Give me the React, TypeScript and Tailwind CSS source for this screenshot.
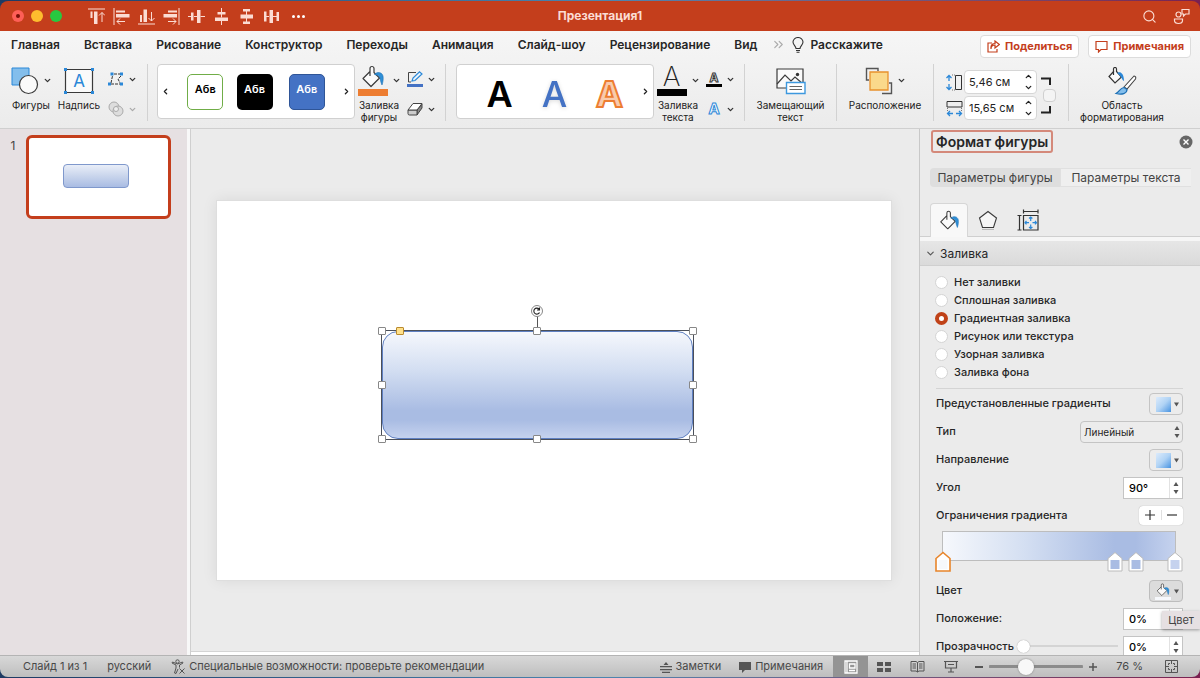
import { ReactNode, useState } from "react";
import { ChevronDown, ChevronLeft, ChevronRight, ChevronUp, ChevronsRight, Search } from "lucide-react";

const TABS = [
  "Главная", "Вставка", "Рисование", "Конструктор", "Переходы",
  "Анимация", "Слайд-шоу", "Рецензирование", "Вид",
];

const FILLS = [
  "Нет заливки", "Сплошная заливка", "Градиентная заливка",
  "Рисунок или текстура", "Узорная заливка", "Заливка фона",
];

const ALIGN_ICONS = [
  { label: "По верхнему краю", d: "M0 1H17M14 14V4.500M11 7.500L14 4.500L17 7.500", bars: "M2.500 3.500h2v6.500h-2zM6 3.500h3.500v12.500h-3.500z" },
  { label: "По левому краю", d: "M1 0V17M4 13.500H12M7 10.500L4 13.500L7 16.500", bars: "M3 2.500h9v2h-9zM3 6h13.500v3.500h-13.500z" },
  { label: "По нижнему краю", d: "M0 16H17M13.500 4V13M10.500 10L13.500 13L16.500 10", bars: "M2 7h2v7h-2zM5.500 1.500h3.500v12.500h-3.500z" },
  { label: "По правому краю", d: "M16 0V17M5 13.500H13M10 10.500L13 13.500L10 16.500", bars: "M5 2.500h9v2h-9zM.5 6h13.500v3.500h-13.500z" },
  { label: "По центру", d: "M0 8.500H3M6 8.500H9M12.500 8.500H17", bars: "M3 4.500h2.500v8h-2.500zM9 2h3.500v13h-3.500z" },
  { label: "По середине", d: "M8.500 0V4M8.500 6V9.500M8.500 13V17", bars: "M4.500 4h8v2.500h-8zM2 9.500h13v3.500h-13z" },
  { label: "Распределить по вертикали", d: "M8.500 3V7M8.500 10V14", bars: "M5 1h7v2.500h-7zM2.500 6.500h12.500v4h-12.500zM5 13.500h7v2.500h-7z" },
  { label: "Распределить по горизонтали", d: "M3 8.500H6M10 8.500H14", bars: "M1 3.500h2.500v10h-2.500zM6.500 2h3.500v13h-3.500zM13.500 4h2.500v9h-2.500z" },
];

const STOPS = [
  { pos: 0, color: "#f6f8fc" },
  { pos: 74, color: "#a9bce3" },
  { pos: 83, color: "#a9bce3" },
  { pos: 100, color: "#c5d2ee" },
];

const HANDLES = [
  "left-0 top-0", "left-1/2 top-0", "left-full top-0", "left-0 top-1/2",
  "left-full top-1/2", "left-0 top-full", "left-1/2 top-full", "left-full top-full",
];

function Bucket({ className }: { className: string }) {
  return (
    <svg viewBox="0 0 24 24" className={className} fill="none">
      <path d="M9 6.500L2 13.500L10 21.500L18.500 13L13 7.500V3.500A2 2 0 0 0 9 3.500V11" fill="#fafafa" stroke="#3a3a3a" strokeWidth="1.200" strokeLinejoin="round" />
      <path d="M13.500 9.500C16 6.500 21 7 22 11C22.500 14 22 17 21 20C19.500 17 19.500 14 18.500 12C17.500 10 15.500 10 13.500 9.500Z" fill="#2f8fd6" stroke="#1c6fb4" strokeWidth=".6" />
    </svg>
  );
}

function Caret({ faded = false }: { faded?: boolean }) {
  return <ChevronDown className={faded ? "size-[9px] shrink-0 text-[#aaa]" : "size-[9px] shrink-0 text-[#333]"} strokeWidth={3.5} />;
}

function Divider() {
  return <div className="mt-[2px] h-[57px] w-px shrink-0 bg-[#d2d2d2]" />;
}

function BigButton({ icon, label, className, caret = false }: { icon: ReactNode; label: ReactNode; className: string; caret?: boolean }) {
  return (
    <button className={`flex shrink-0 flex-col items-center text-center text-[10px] leading-[12px] ${className}`}>
      <span className="flex h-[37px] items-center gap-1">
        {icon}
        {caret && <Caret />}
      </span>
      <span className="whitespace-nowrap">{label}</span>
    </button>
  );
}

function SmallButton({ label, children, faded }: { label: string; children: ReactNode; faded?: boolean }) {
  return (
    <button aria-label={label} className="flex h-[30px] items-center gap-1">
      {children}
      <Caret faded={faded} />
    </button>
  );
}

function SizeField({ label, value, icon }: { label: string; value: string; icon: ReactNode }) {
  return (
    <div className="flex items-center gap-px">
      {icon}
      <div className="flex h-6 w-[73px] items-center rounded border border-[#d6d6d6] bg-white pr-[3px] pl-1">
        <input aria-label={label} defaultValue={value} className="w-0 flex-1 text-[11px] outline-none" />
        <span className="flex flex-col gap-0.5">
          <ChevronUp className="size-[9px]" strokeWidth={3.5} />
          <ChevronDown className="size-[9px]" strokeWidth={3.5} />
        </span>
      </div>
    </div>
  );
}

function Triangles({ className = "" }: { className?: string }) {
  return (
    <svg viewBox="0 0 6 14" className={`h-[14px] w-[6px] shrink-0 ${className}`} fill="#555">
      <path d="M.5 5L3 1L5.500 5ZM.5 9L3 13L5.500 9Z" />
    </svg>
  );
}

function Row({ label, id, children }: { label: string; id: string; children: ReactNode }) {
  return (
    <div className="flex h-7 shrink-0 items-center justify-between">
      <label htmlFor={id} className="pb-0.5">{label}</label>
      {children}
    </div>
  );
}

function SwatchButton({ id }: { id: string }) {
  return (
    <button id={id} className="flex h-[22px] w-[34px] items-center justify-between rounded-sm border border-[#c4c4c4] bg-[#ececec] pr-[3px] pl-[6px]">
      <span className="size-[15px] bg-linear-135 from-[#dcebfb] via-[#b0d3f5] to-[#4593e0]" />
      <svg viewBox="0 0 6 5" className="h-[5px] w-[5px]" fill="#555"><path d="M0 0H6L3 5Z" /></svg>
    </button>
  );
}

function Stepper({ id, label, value }: { id: string; label?: string; value: string }) {
  return (
    <div className="flex h-[22px] w-[60px] items-center border border-[#c4c4c4] bg-white">
      <input id={id} aria-label={label} defaultValue={value} className="w-0 flex-1 pl-[5px] text-[11px] text-black outline-none" />
      <span className="flex h-full w-[13px] items-center justify-center border-l border-[#e2e2e2]"><Triangles /></span>
    </div>
  );
}

function TitleBar() {
  return (
    <header className="grid h-[30px] shrink-0 grid-cols-[1fr_auto_1fr] items-center rounded-t-lg bg-[#c43e1c] text-[#fbdcd3]">
      <div className="flex items-center">
        <div className="ml-3 flex gap-[7px]">
          <button aria-label="Закрыть" className="flex size-3 items-center justify-center rounded-full bg-[#fe5f57]"><span className="size-1 rounded-full bg-[#7a0f08]" /></button>
          <button aria-label="Свернуть" className="size-3 rounded-full bg-[#febc2e]" />
          <button aria-label="Развернуть" className="size-3 rounded-full bg-[#28c840]" />
        </div>
        <div className="ml-[26px] flex items-center gap-2">
          {ALIGN_ICONS.map((icon) => (
            <button key={icon.label} aria-label={icon.label}>
              <svg viewBox="0 0 17 17" className="size-[17px]">
                <path d={icon.d} fill="none" stroke="currentColor" strokeWidth="1" />
                <path d={icon.bars} fill="currentColor" />
              </svg>
            </button>
          ))}
          <button aria-label="Ещё" className="flex gap-[2px] pl-1">
            <i className="size-[3px] rounded-full bg-white" />
            <i className="size-[3px] rounded-full bg-white" />
            <i className="size-[3px] rounded-full bg-white" />
          </button>
        </div>
      </div>
      <h1 className="text-[12px] font-bold">Презентация1</h1>
      <div className="flex items-center justify-end gap-4 pr-[10px]">
        <button aria-label="Поиск"><Search className="size-[15px]" strokeWidth={1.8} /></button>
        <button aria-label="Совместная работа">
          <svg viewBox="0 0 17 17" className="size-[17px]" fill="none" stroke="currentColor" strokeWidth="1.200">
            <circle cx="5.500" cy="6.500" r="2.500" />
            <path d="M1.500 11H9.500V12.500A4 3 0 0 1 1.500 12.500ZM9 1.500H16V6H12.500L10.500 8V6H9Z" />
          </svg>
        </button>
      </div>
    </header>
  );
}

function Tabs() {
  return (
    <nav className="flex h-[31px] shrink-0 items-center justify-between pr-[9px] pl-[11px] text-[12px] font-semibold">
      <div className="flex items-center gap-6 pb-1">
        {TABS.map((tab) => <button key={tab}>{tab}</button>)}
        <button className="-ml-2.5 flex items-center gap-1.5">
          <ChevronsRight className="size-[15px] text-[#aaa]" strokeWidth={1.8} />
          <svg viewBox="0 0 12 16" className="h-4 w-3" fill="none" stroke="#333" strokeWidth="1.100">
            <path d="M4 11.500C4 9 1 8 1 5A5 4.500 0 0 1 11 5C11 8 8 9 8 11.500ZM4 13.500H8M4.500 15.300H7.500" />
          </svg>
          Расскажите
        </button>
      </div>
      <div className="flex gap-[9px] text-[11px] font-bold text-[#c43e1c]">
        <button className="flex h-[23px] items-center gap-[5px] rounded border border-[#dcdcdc] bg-white px-[6px]">
          <svg viewBox="0 0 13 13" className="size-[13px]" fill="none" stroke="currentColor" strokeWidth="1.200">
            <path d="M5 3H1V12H10V9M4 9C4 6 6 5 8 5V8L12.300 4.500L8 1V3.500C5.500 3.500 3.500 5 4 9Z" />
          </svg>
          Поделиться
        </button>
        <button className="flex h-[23px] items-center gap-[5px] rounded border border-[#dcdcdc] bg-white px-[6px]">
          <svg viewBox="0 0 13 13" className="size-[13px]" fill="none" stroke="currentColor" strokeWidth="1.200">
            <path d="M1 1.500H12V9.500H6L3.500 12V9.500H1Z" />
          </svg>
          Примечания
        </button>
      </div>
    </nav>
  );
}

function Ribbon() {
  return (
    <section className="flex h-[67px] shrink-0 items-start border-b border-[#cfcfcf] text-[#222]">
      <BigButton className="ml-[10px] w-[42px]" caret label="Фигуры" icon={
        <svg viewBox="0 0 28 28" className="size-7">
          <path d="M1 1H18V18H1Z" fill="#83beec" stroke="#2b88d8" />
          <circle cx="17.500" cy="17.500" r="9" fill="#fafafa" stroke="#3a3a3a" strokeWidth="1.200" />
        </svg>
      } />
      <BigButton className="ml-1 w-[46px]" label="Надпись" icon={
        <svg viewBox="0 0 30 26" className="h-[26px] w-[30px]">
          <path d="M1.500 1.500H28.500V24.500H1.500Z" fill="#fafafa" stroke="#3a3a3a" strokeWidth="1.200" />
          <text x="15" y="19" textAnchor="middle" fontSize="17" fill="#2b88d8">A</text>
          <path d="M0 0h3v3h-3zM27 0h3v3h-3zM0 23h3v3h-3zM27 23h3v3h-3z" fill="#2b88d8" />
        </svg>
      } />
      <div className="ml-[6px] flex w-[28px] shrink-0 flex-col pt-[2px]">
        <SmallButton label="Изменить фигуру">
          <svg viewBox="0 0 16 16" className="size-4 shrink-0" fill="none">
            <path d="M6 3H13M3 12L4.500 5M13 5L10 8L12 12M3 13H12" stroke="#333" strokeDasharray="3 1" />
            <path d="M2.500 1.500h3v3h-3zM12 1.500h3v3h-3zM0 11.500h3v3h-3zM12 11.500h3v3h-3z" fill="#2b88d8" />
          </svg>
        </SmallButton>
        <SmallButton label="Объединить фигуры" faded>
          <svg viewBox="0 0 16 16" className="size-4 shrink-0" fill="#ddd" stroke="#aaa">
            <circle cx="6" cy="6" r="5" /><circle cx="10" cy="10" r="5" /><circle cx="8" cy="8" r="2.500" fill="#eee" />
          </svg>
        </SmallButton>
      </div>
      <div className="ml-[11px]"><Divider /></div>
      <div className="mt-[2px] ml-[9px] flex h-[55px] w-[198px] shrink-0 items-center justify-between rounded border border-[#d0d0d0] bg-white px-[3px] text-[11px] font-semibold">
        <button aria-label="Предыдущий стиль"><ChevronLeft className="size-[9px]" strokeWidth={3.5} /></button>
        <button className="-mr-1 size-9 rounded-[5px] border border-[#70ad47] pb-1 text-black">Абв</button>
        <button className="size-9 rounded-[5px] bg-black pb-1 text-white">Абв</button>
        <button className="-ml-px size-9 rounded-[5px] border border-[#2f5597] bg-[#4472c4] pb-1 text-white">Абв</button>
        <button aria-label="Следующий стиль"><ChevronRight className="size-[9px]" strokeWidth={3.5} /></button>
      </div>
      <BigButton className="ml-[3px] w-[42px]" caret label={<>Заливка<br />фигуры</>} icon={
        <span className="flex w-[30px] flex-col items-center"><Bucket className="size-6" /><span className="h-[7px] w-[30px] bg-[#ed7d31]" /></span>
      } />
      <div className="ml-[7px] flex w-[30px] shrink-0 flex-col pt-[2px]">
        <SmallButton label="Контур фигуры">
          <svg viewBox="0 0 16 16" className="size-4 shrink-0" fill="none">
            <path d="M9 1.500H1.500V11H4" stroke="#444" /><path d="M5 10L6 7L12.500 .8L15 3L8 9.500Z" fill="#e8f3fc" stroke="#2b88d8" strokeWidth="1.200" />
            <path d="M0 13h16v3h-16z" fill="#4472c4" />
          </svg>
        </SmallButton>
        <SmallButton label="Эффекты фигуры">
          <svg viewBox="0 0 16 16" className="size-4 shrink-0" fill="#fff" stroke="#444" strokeLinejoin="round">
            <path d="M10 9V14L15 7V3Z" fill="#888" /><path d="M1 9H10V14H2.500Q1 14 1 12.500Z" fill="#ccc" /><path d="M1 9L6 2.500H15L10 9Z" />
          </svg>
        </SmallButton>
      </div>
      <div className="ml-[8px]"><Divider /></div>
      <div className="mt-[2px] ml-[10px] flex h-[55px] w-[198px] shrink-0 items-center justify-end rounded border border-[#d0d0d0] bg-white pr-[3px] text-[36px] leading-[50px] font-bold">
        <button className="w-[55px] pt-1 font-semibold text-black">A</button>
        <button className="w-[55px] pt-1 font-medium text-[#4472c4] drop-shadow-sm">A</button>
        <button className="w-[55px] pt-1 text-[#f8cbad] [-webkit-text-stroke:2px_#ed7d31]">A</button>
        <button aria-label="Следующий стиль текста" className="ml-1"><ChevronRight className="size-[9px]" strokeWidth={3.5} /></button>
      </div>
      <BigButton className="ml-[3px] w-[42px]" caret label={<>Заливка<br />текста</>} icon={
        <span className="flex w-[30px] flex-col items-center"><span className="h-[24px] text-[27px] leading-[24px] font-extralight text-[#222]">A</span><span className="h-[7px] w-[30px] bg-black" /></span>
      } />
      <div className="ml-[7px] flex w-[30px] shrink-0 flex-col pt-[2px]">
        <SmallButton label="Контур текста">
          <span className="flex w-4 shrink-0 flex-col items-center border-b-[3px] border-black text-[12px] leading-[13px] font-bold text-white [-webkit-text-stroke:1px_#333]">A</span>
        </SmallButton>
        <SmallButton label="Эффекты текста">
          <span className="w-4 shrink-0 text-center text-[15px] leading-[20px] font-bold text-white [-webkit-text-stroke:1px_#2b88d8]">A</span>
        </SmallButton>
      </div>
      <div className="ml-[8px]"><Divider /></div>
      <BigButton className="w-[91px]" label={<>Замещающий<br />текст</>} icon={
        <svg viewBox="0 0 30 28" className="h-7 w-[30px]" fill="none">
          <path d="M1 2H27V21H1Z" fill="#fafafa" stroke="#3a3a3a" strokeWidth="1.200" />
          <path d="M1 17L9 8L15 14L19 10L27 17" stroke="#3a3a3a" strokeWidth="1.200" /><circle cx="21.500" cy="7.500" r="1.700" fill="#333" />
          <path d="M10.500 15.500H29V26.500H10.500Z" fill="#fff" stroke="#3c98de" strokeWidth="1.400" /><path d="M13.500 19.500H26M13.500 22.500H26" stroke="#666" />
        </svg>
      } />
      <Divider />
      <BigButton className="w-[96px]" caret label="Расположение" icon={
        <svg viewBox="0 0 28 28" className="size-7" fill="none">
          <path d="M13 4V1.500H1.500V13H4M17 26.500H26.500V16H24" stroke="#555" strokeWidth="1.400" /><path d="M5 5H23V23H5Z" fill="#fad98b" stroke="#e8912d" strokeWidth="1.300" />
        </svg>
      } />
      <Divider />
      <div className="ml-3 flex shrink-0 items-center gap-1">
        <div className="flex flex-col gap-[2px] pt-[8px]">
          <SizeField label="Высота" value="5,46 см" icon={
            <svg viewBox="0 0 17 17" className="size-[17px]" fill="none"><path d="M3 1.500V7M3 10V15.500M.5 4L3 1.500L5.500 4M.5 13L3 15.500L5.500 13" stroke="#2b88d8" strokeWidth="1.300" /><path d="M6 1H9M6 16H9" stroke="#777" strokeDasharray="1 1" /><path d="M9.500 1.500H15.500V15.500H9.500Z" stroke="#333" /></svg>
          } />
          <SizeField label="Ширина" value="15,65 см" icon={
            <svg viewBox="0 0 17 17" className="size-[17px]" fill="none"><path d="M1 1.500H16V7H1Z" stroke="#333" /><path d="M1.500 8V11M15.500 8V11" stroke="#777" strokeDasharray="1 1" /><path d="M1.500 13.500H7M10 13.500H15.500M4 11L1.500 13.500L4 16M13 11L15.500 13.500L13 16" stroke="#2b88d8" strokeWidth="1.300" /></svg>
          } />
        </div>
        <div className="flex flex-col items-start gap-1 pt-2">
          <svg viewBox="0 0 10 8" className="h-2 w-[10px]"><path d="M0 1.500H9V8" fill="none" stroke="#222" strokeWidth="2" /></svg>
          <input type="checkbox" aria-label="Сохранить пропорции" className="ml-[2px] size-[13px] appearance-none rounded-sm border border-[#d0d0d0] bg-[#f4f4f4]" />
          <svg viewBox="0 0 10 8" className="h-2 w-[10px]"><path d="M0 6.500H9V0" fill="none" stroke="#222" strokeWidth="2" /></svg>
        </div>
      </div>
      <div className="ml-[12px]"><Divider /></div>
      <BigButton className="w-[106px]" label={<>Область<br />форматирования</>} icon={
        <svg viewBox="0 0 30 28" className="h-7 w-[30px]" fill="none">
          <path d="M7 4L2 9.500L8 16L14.500 10L9.500 4.500V2A1.500 1.500 0 0 0 6.500 2V8" fill="#fafafa" stroke="#333" strokeWidth="1.200" />
          <path d="M10 6C13 4 17 6 17 14C14.500 13 15 9 10 6Z" fill="#2b88d8" />
          <path d="M17 20L27 9Q29.500 9.500 28.500 12L20 22Z" fill="#fff" stroke="#444" strokeWidth="1.100" />
          <path d="M17 20.500C13 21 13 24 9 26.500C15 28 20 26.500 20 22.500Z" fill="#83beec" stroke="#1c6fb4" strokeWidth="1.200" />
        </svg>
      } />
    </section>
  );
}

function SlideList() {
  return (
    <aside className="flex w-[187px] shrink-0 items-start bg-[#e6e0e2] pt-[6px]">
      <span className="w-[26px] pt-1 text-center text-[12px] leading-[14px] text-[#444]">1</span>
      <button aria-label="Слайд 1" className="flex h-[84px] w-[145px] items-start rounded-md border-[3px] border-[#c43e1c] bg-white pt-[26px] pl-[34px]">
        <span className="block h-[24px] w-[66px] rounded border border-[#7f98cc] bg-linear-to-b from-[#e9eef8] via-[#c9d5ec] to-[#a9bce3]" />
      </button>
    </aside>
  );
}

function Canvas() {
  return (
    <main className="flex min-w-0 flex-1 flex-col border-l border-[#cfcfcf] bg-white">
      <div className="flex min-h-0 flex-1 items-center border-b border-[#d4d4d4] bg-[#ebebeb] pr-[27px] pl-[25px]">
        <div className="relative aspect-[676/381] w-full border border-[#dedede] bg-white shadow-[0_0_14px_rgba(0,0,0,0.08)]">
          {/* selected shape */}
          <div className="absolute top-[34.2%] left-[24.3%] h-[29%] w-[46.5%] border border-[#4a4f5a]">
            <div className="size-full rounded-[16px] border border-[#5f80c2] bg-[linear-gradient(#f5f7fc,#d4dff2_35%,#a9bce3_74%,#a9bce3_83%,#c5d2ee)]" />
            <span className="absolute bottom-full left-1/2 h-4 w-px bg-[#555]" />
            <span className="absolute -top-[26px] left-1/2 flex size-3 -translate-x-1/2 items-center justify-center rounded-full border border-[#888] bg-white">
              <svg viewBox="0 0 8 8" className="size-2" fill="none" stroke="#222" strokeWidth="1.100"><path d="M6.500 5.500A3 3 0 1 1 6 2M6.500 .5V3H4" /></svg>
            </span>
            {HANDLES.map((pos) => (
              <span key={pos} className={`absolute size-2 -translate-1/2 rounded-[1px] border border-[#888] bg-white ${pos}`} />
            ))}
            <span className="absolute top-0 left-[6%] size-2 -translate-1/2 rounded-[1px] border border-[#b98a2e] bg-[#ffe08a]" />
          </div>
        </div>
      </div>
      <div className="h-[3px] shrink-0" />
    </main>
  );
}

function FormatPanel() {
  const [fill, setFill] = useState(FILLS[2]);

  return (
    <aside className="flex w-[281px] shrink-0 flex-col overflow-hidden border-l border-[#c8c8c8] bg-[#ebebeb] text-[12px] leading-[14px] text-[#262626]">
      <div className="flex shrink-0 items-center justify-between pt-px pr-[7px] pl-[11px]">
        <h2 className="rounded-[3px] border-2 border-[#d4897a] px-[3px] py-px text-[14px] leading-[17px] font-semibold">Формат фигуры</h2>
        <button aria-label="Закрыть панель">
          <svg viewBox="0 0 14 14" className="size-[14px]"><circle cx="7" cy="7" r="6.500" fill="#666" /><path d="M4.500 4.500L9.500 9.500M9.500 4.500L4.500 9.500" stroke="#fff" strokeWidth="1.400" /></svg>
        </button>
      </div>
      <div className="mt-[15px] mr-[9px] ml-[10px] flex h-[19px] shrink-0 text-[#444]">
        <button className="flex-1 rounded-l bg-[#dedede] whitespace-nowrap">Параметры фигуры</button>
        <button className="flex-1 border-y border-l border-[#e0e0e0] bg-[#efefef] whitespace-nowrap">Параметры текста</button>
      </div>
      <div className="mt-[16px] flex h-[34px] shrink-0 items-stretch border-b border-[#cfcfcf] pl-[10px]">
        <button aria-label="Заливка и границы" className="-mb-px flex w-[38px] items-center justify-center rounded-t-sm border border-b-0 border-[#d6d6d6] bg-[#f8f8f8]"><Bucket className="size-[21px]" /></button>
        <button aria-label="Эффекты" className="flex w-[40px] items-center justify-center">
          <svg viewBox="0 0 20 20" className="size-5" fill="#f6f6f6" stroke="#3a3a3a" strokeWidth="1.100"><path d="M10 1.500L18.500 8L15.500 17.500H4.500L1.500 8Z" /><path d="M4 19.500H16" stroke="#bbb" /></svg>
        </button>
        <button aria-label="Размер и свойства" className="flex w-[40px] items-center justify-center">
          <svg viewBox="0 0 22 22" className="size-[22px]" fill="none">
            <path d="M6.500 6.500H21V21H6.500ZM6.500 2.500H21M6.500 .5V4.500M21 .5V4.500M2.500 6.500V21M.5 6.500H4.500M.5 21H4.500" stroke="#333" strokeWidth="1.200" />
            <path d="M13.700 8V12M13.700 15.500V19.500M8 13.700H12M15.500 13.700H19.500M12 9.500L13.700 8L15.400 9.500M12 18L13.700 19.500L15.400 18M9.500 12L8 13.700L9.500 15.400M18 12L19.500 13.700L18 15.400" stroke="#2b88d8" strokeWidth="1.200" />
          </svg>
        </button>
      </div>
      <div className="h-1 shrink-0 bg-[#f6f6f6]" />
      <button className="flex h-[25px] shrink-0 items-center gap-1 border-b border-[#cfcfcf] bg-linear-to-b from-[#e6e6e6] to-[#dadada] pt-px pl-[5px]">
        <ChevronDown className="size-[11px] text-[#555]" strokeWidth={2.5} />
        Заливка
      </button>
      <div role="radiogroup" aria-label="Тип заливки" className="mt-[7px] ml-[15px] shrink-0 text-[11px] font-medium">
        {FILLS.map((name) => (
          <label key={name} className="flex h-[18px] items-center gap-[6px]">
            <input type="radio" name="fill" checked={fill === name} onChange={() => setFill(name)}
              className="size-[13px] appearance-none rounded-full border border-[#d4d4d4] bg-white checked:border-4 checked:border-[#c04218]" />
            {name}
          </label>
        ))}
      </div>
      <div className="mt-[7px] mr-[17px] ml-[16px] flex shrink-0 flex-col border-t border-[#d4d4d4] pt-px text-[11px] font-medium">
        <Row label="Предустановленные градиенты" id="preset"><SwatchButton id="preset" /></Row>
        <Row label="Тип" id="type">
          <span className="relative">
            <select id="type" className="h-[22px] w-[103px] appearance-none rounded-sm border border-[#c4c4c4] bg-[#ececec] pl-[3px] text-[10px] font-normal">
              <option>Линейный</option>
            </select>
            <Triangles className="pointer-events-none absolute top-1 right-[3px]" />
          </span>
        </Row>
        <Row label="Направление" id="direction"><SwatchButton id="direction" /></Row>
        <Row label="Угол" id="angle"><Stepper id="angle" value="90°" /></Row>
        <div className="flex h-7 shrink-0 items-center justify-between pb-0.5">
          <span>Ограничения градиента</span>
          <span className="flex h-[19px] w-[44px] items-center divide-x divide-[#e0e0e0] rounded bg-white shadow-[0_0_1px_#999]">
            <button aria-label="Добавить точку" className="flex flex-1 justify-center"><svg viewBox="0 0 10 10" className="size-[10px]" stroke="#333" strokeWidth="1.200"><path d="M5 0V10M0 5H10" /></svg></button>
            <button aria-label="Удалить точку" className="flex flex-1 justify-center"><svg viewBox="0 0 10 10" className="size-[10px]" stroke="#333" strokeWidth="1.200"><path d="M0 5H10" /></svg></button>
          </span>
        </div>
        <div className="relative mt-[1px] mr-[7px] mb-[16px] ml-[6px] h-[30px] border border-[#bdbdbd] bg-[linear-gradient(90deg,#f6f8fc,#d4dff2_35%,#a9bce3_74%,#a9bce3_83%,#c5d2ee)]">
          {STOPS.map((stop, i) => (
            <button key={stop.pos} aria-label={`Точка ${stop.pos}%`} className="absolute top-[19px] -translate-x-1/2" style={{ left: `${stop.pos}%` }}>
              <svg viewBox="0 0 16 21" className="h-[21px] w-4">
                <path d="M1 20V7.500L8 1.500L15 7.500V20Z" fill="#fff" stroke={i === 0 ? "#e8852b" : "#bbb"} strokeWidth={i === 0 ? 1.6 : 1} />
                <path d="M3.500 9h9v9h-9z" fill={stop.color} />
              </svg>
            </button>
          ))}
        </div>
        <Row label="Цвет" id="color">
          <button id="color" className="flex h-[22px] w-[34px] items-center justify-between rounded-sm border border-[#bdbdbd] bg-[#dcdcdc] pr-[3px] pl-[5px]">
            <span className="flex flex-col items-center"><Bucket className="size-[14px]" /><span className="h-[3px] w-4 bg-[#f6f8fc]" /></span>
            <svg viewBox="0 0 6 5" className="h-[5px] w-[5px]" fill="#555"><path d="M0 0H6L3 5Z" /></svg>
          </button>
        </Row>
        <div className="relative">
          <Row label="Положение:" id="position"><Stepper id="position" value="0%" /></Row>
          <span role="tooltip" className="absolute top-[6px] -right-[17px] bg-[#e6e0e2] px-[6px] py-[2px] text-[11px] font-normal text-[#444] shadow-[0_1px_3px_rgba(0,0,0,0.35)]">Цвет</span>
        </div>
        <div className="flex h-7 shrink-0 items-center">
          <label htmlFor="opacity" className="pb-0.5">Прозрачность</label>
          <input id="opacity" type="range" defaultValue={0} className="mr-[5px] mb-0.5 ml-[3px] h-[13px] w-0 flex-1 appearance-none bg-[linear-gradient(#d4d4d4,#d4d4d4)] bg-[length:100%_2px] bg-center bg-no-repeat [&::-webkit-slider-thumb]:size-[13px] [&::-webkit-slider-thumb]:appearance-none [&::-webkit-slider-thumb]:rounded-full [&::-webkit-slider-thumb]:bg-white [&::-webkit-slider-thumb]:shadow-[0_0_1px_#888]" />
          <Stepper id="opacity-value" label="Прозрачность, %" value="0%" />
        </div>
      </div>
    </aside>
  );
}

function StatusBar() {
  return (
    <footer className="flex h-[22px] shrink-0 items-center justify-between rounded-b-lg border-t border-[#b4b4b4] bg-linear-to-b from-[#d8d8d8] to-[#bebebe] pr-[22px] pl-[23px] text-[11px] text-[#484848]">
      <div className="flex items-center gap-[20px]">
        <span>Слайд 1 из 1</span>
        <button>русский</button>
        <button className="flex items-center gap-[3px]">
          <svg viewBox="0 0 15 15" className="size-[15px]" fill="none" stroke="#555">
            <circle cx="6.500" cy="2.500" r="1.700" /><path d="M1 4L5 6V9L3.500 14L5 14.500L7 10M12 4L8.500 6V8.500M1 4L1.500 3L6.500 5L11.500 3L12 4M8.500 9.500L13.500 14.500M13.500 9.500L8.500 14.500" />
          </svg>
          Специальные возможности: проверьте рекомендации
        </button>
      </div>
      <div className="flex h-full items-center">
        <button className="mr-[18px] flex items-center gap-1">
          <svg viewBox="0 0 12 12" className="size-3" fill="#555"><path d="M3.500 4L6 1L8.500 4ZM0 5h12v1.200H0zM0 8h12v1.200H0zM2 10.800h8v1.200H2z" /></svg>
          Заметки
        </button>
        <button className="mr-[10px] flex items-center gap-1">
          <svg viewBox="0 0 12 12" className="size-3" fill="#555"><path d="M0 1H12V9H6L3 12V9H0Z" /></svg>
          Примечания
        </button>
        <button aria-label="Обычный" className="flex h-full w-[35px] items-center justify-center bg-[#949494]">
          <svg viewBox="0 0 14 14" className="size-[14px]" fill="none" stroke="#fff" strokeWidth="1.300"><path d="M1 1H13V13H1ZM3 1V13M5.500 4H11V8H5.500ZM5 10.500H11" /></svg>
        </button>
        <button aria-label="Сортировщик" className="flex w-[32px] justify-center">
          <svg viewBox="0 0 14 12" className="h-3 w-[14px]" fill="#555"><path d="M0 1h6v4h-6zM8 1h6v4h-6zM0 7h6v4h-6zM8 7h6v4h-6z" /></svg>
        </button>
        <button aria-label="Чтение" className="flex w-[34px] justify-center">
          <svg viewBox="0 0 15 13" className="h-[13px] w-[15px]" fill="none" stroke="#555"><path d="M1 1.500H6L7.500 2.500L9 1.500H14V11H9L7.500 12L6 11H1ZM7.500 2.500V12M2.500 4H6M2.500 6H6M2.500 8H6M9 4H12.500M9 6H12.500M9 8H12.500" /></svg>
        </button>
        <button aria-label="Показ слайдов" className="flex w-[34px] justify-center">
          <svg viewBox="0 0 14 13" className="h-[13px] w-[14px]" fill="none" stroke="#555" strokeWidth="1.200"><path d="M0 1.500H14M1.500 1.500V8H12.500V1.500M4 4.500H10M7 8V11.500M4 12H10" /></svg>
        </button>
        <button aria-label="Уменьшить" className="mr-[6px] ml-[7px] h-[2px] w-2 bg-[#555]" />
        <input type="range" aria-label="Масштаб" defaultValue={37} className="h-4 w-[94px] appearance-none rounded-full bg-[linear-gradient(#8b8b8b,#8b8b8b)] bg-[length:100%_3px] bg-center bg-no-repeat [&::-webkit-slider-thumb]:size-4 [&::-webkit-slider-thumb]:appearance-none [&::-webkit-slider-thumb]:rounded-full [&::-webkit-slider-thumb]:bg-[#f8f8f8] [&::-webkit-slider-thumb]:shadow-[0_0_2px_#777]" />
        <button aria-label="Увеличить" className="mr-[19px] ml-[6px]">
          <svg viewBox="0 0 8 8" className="size-2" stroke="#555" strokeWidth="1.500"><path d="M4 0V8M0 4H8" /></svg>
        </button>
        <span className="mr-[22px] whitespace-nowrap">76 %</span>
        <button aria-label="По размеру окна">
          <svg viewBox="0 0 13 13" className="size-[13px]" fill="none" stroke="#555"><path d="M.5 .5H12.500V12.500H.5ZM6.500 1V4M6.500 9V12M1 6.500H4M9 6.500H12M3.500 3.500H5M3.500 3.500V5M9.500 3.500H8M9.500 3.500V5M3.500 9.500H5M3.500 9.500V8M9.500 9.500H8M9.500 9.500V8" /></svg>
        </button>
      </div>
    </footer>
  );
}

export default function App() {
  return (
    <div className="flex h-screen flex-col overflow-hidden bg-linear-to-r from-[#1e3a63] via-[#4b86b0] to-[#7a2050] pt-px pb-px font-['Inter','Liberation_Sans',sans-serif]">
      <TitleBar />
      <div className="shrink-0 bg-linear-to-b from-[#f6f6f6] to-[#ebebeb] text-[#262626]">
        <Tabs />
        <Ribbon />
      </div>
      <div className="flex min-h-0 flex-1 bg-white">
        <SlideList />
        <div className="w-[3px] shrink-0 bg-[#f8f8f8]" />
        <Canvas />
        <FormatPanel />
      </div>
      <StatusBar />
    </div>
  );
}
